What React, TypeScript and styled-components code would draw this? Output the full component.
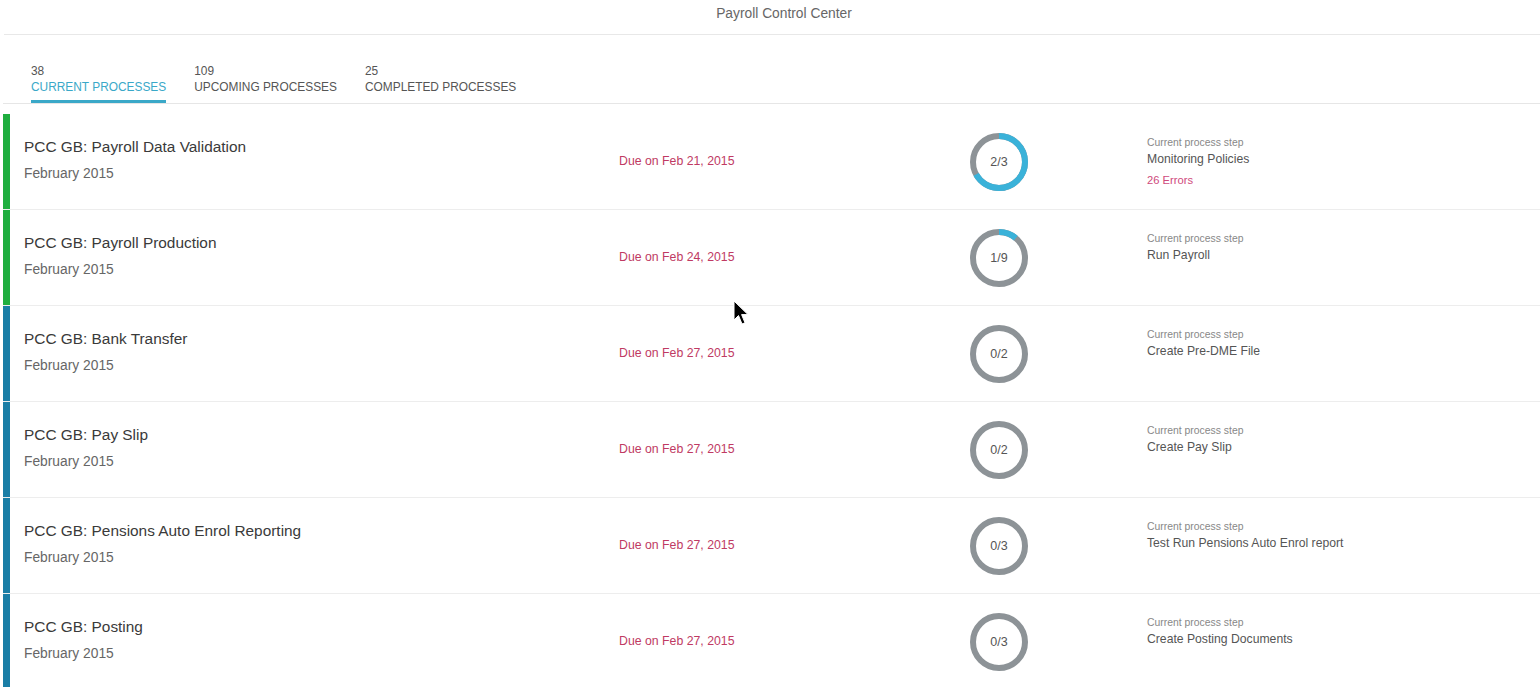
import React from 'react';
import styled, { createGlobalStyle } from 'styled-components';

const GlobalStyle = createGlobalStyle`
  html, body {
    margin: 0;
    padding: 0;
    background: #ffffff;
  }
  body {
    font-family: 'Liberation Sans', Arial, sans-serif;
    color: #333;
  }
`;

const Page = styled.div`
  position: relative;
  margin-left: 3px;
  width: 1537px;
  height: 687px;
  overflow: hidden;
`;

const Header = styled.div`
  height: 34px;
  line-height: 28px;
  text-align: center;
  font-size: 13.8px;
  color: #666;
  border-bottom: 1px solid #e8e8e8;
  margin-left: 1px;
  padding-left: 24px;
`;

const TabBar = styled.div`
  display: flex;
  gap: 28px;
  padding: 30px 0 0 28px;
  border-bottom: 1px solid #e6e6e6;
`;

const Tab = styled.div<{ active?: boolean }>`
  display: flex;
  flex-direction: column;
  font-size: 11.9px;
  color: ${(p) => (p.active ? '#3aa8c8' : '#555')};
`;

const Count = styled.div`
  line-height: 12px;
  color: #555;
`;

const TabLabel = styled.div`
  line-height: 20px;
  text-transform: uppercase;
`;

const Underline = styled.div<{ active?: boolean }>`
  margin-top: 3px;
  height: 3px;
  background: ${(p) => (p.active ? '#3aa8c8' : 'transparent')};
`;

const List = styled.div`
  padding-top: 10px;
`;

const Row = styled.div`
  display: flex;
  height: 95px;
  border-bottom: 1px solid #ededed;
`;

const Bar = styled.div<{ color: string }>`
  width: 7px;
  flex: none;
  background: ${(p) => p.color};
`;

const Cells = styled.div`
  flex: 1;
  display: grid;
  grid-template-columns: 595px 351px 177px 1fr;
  padding-left: 14px;
`;

const TitleCell = styled.div`
  padding-top: 23px;
`;

const Title = styled.div`
  font-size: 15.4px;
  line-height: 20px;
  color: #3a3a3a;
`;

const Period = styled.div`
  margin-top: 8px;
  font-size: 13.8px;
  line-height: 18px;
  color: #666;
`;

const Due = styled.div`
  display: flex;
  align-items: center;
  padding-bottom: 2px;
  font-size: 12.3px;
  color: #c03a63;
`;

const RingCell = styled.div`
  display: flex;
  align-items: center;
`;

const RingWrap = styled.div`
  position: relative;
  width: 58px;
  height: 58px;
`;

const RingLabel = styled.div`
  position: absolute;
  inset: 0;
  display: flex;
  align-items: center;
  justify-content: center;
  font-size: 12.5px;
  color: #555;
`;

const StepCell = styled.div`
  padding-top: 22px;
`;

const StepCaption = styled.div`
  font-size: 10.4px;
  line-height: 14px;
  color: #888;
`;

const StepName = styled.div`
  margin-top: 1px;
  font-size: 12.2px;
  line-height: 16px;
  color: #555;
`;

const Errors = styled.div`
  margin-top: 6px;
  font-size: 11.2px;
  line-height: 14px;
  color: #cf4a7c;
`;

const Cursor = styled.svg`
  position: absolute;
  left: 730px;
  top: 300px;
`;

interface Process {
  title: string;
  due: string;
  done: number;
  total: number;
  step: string;
  errors?: string;
  color: string;
}

const GREEN = '#1fae3f';
const BLUE = '#1a7ea6';

const processes: Process[] = [
  { title: 'PCC GB: Payroll Data Validation', due: 'Due on Feb 21, 2015', done: 2, total: 3, step: 'Monitoring Policies', errors: '26 Errors', color: GREEN },
  { title: 'PCC GB: Payroll Production', due: 'Due on Feb 24, 2015', done: 1, total: 9, step: 'Run Payroll', color: GREEN },
  { title: 'PCC GB: Bank Transfer', due: 'Due on Feb 27, 2015', done: 0, total: 2, step: 'Create Pre-DME File', color: BLUE },
  { title: 'PCC GB: Pay Slip', due: 'Due on Feb 27, 2015', done: 0, total: 2, step: 'Create Pay Slip', color: BLUE },
  { title: 'PCC GB: Pensions Auto Enrol Reporting', due: 'Due on Feb 27, 2015', done: 0, total: 3, step: 'Test Run Pensions Auto Enrol report', color: BLUE },
  { title: 'PCC GB: Posting', due: 'Due on Feb 27, 2015', done: 0, total: 3, step: 'Create Posting Documents', color: BLUE },
];

function Ring({ done, total }: { done: number; total: number }) {
  const r = 26;
  const c = 2 * Math.PI * r;
  const part = (done / total) * c;
  return (
    <RingWrap>
      <svg width="58" height="58" viewBox="0 0 58 58">
        <circle cx="29" cy="29" r={r} fill="none" stroke="#8d9397" strokeWidth="6" />
        {done > 0 && (
          <circle
            cx="29"
            cy="29"
            r={r}
            fill="none"
            stroke="#3ab2d9"
            strokeWidth="6"
            strokeDasharray={`${part} ${c}`}
            transform="rotate(-90 29 29)"
          />
        )}
      </svg>
      <RingLabel>
        {done}/{total}
      </RingLabel>
    </RingWrap>
  );
}

export default function App() {
  return (
    <Page>
      <GlobalStyle />
      <Header>Payroll Control Center</Header>
      <TabBar>
        <Tab active>
          <Count>38</Count>
          <TabLabel>Current Processes</TabLabel>
          <Underline active />
        </Tab>
        <Tab>
          <Count>109</Count>
          <TabLabel>Upcoming Processes</TabLabel>
          <Underline />
        </Tab>
        <Tab>
          <Count>25</Count>
          <TabLabel>Completed Processes</TabLabel>
          <Underline />
        </Tab>
      </TabBar>
      <List>
        {processes.map((p) => (
          <Row key={p.title}>
            <Bar color={p.color} />
            <Cells>
              <TitleCell>
                <Title>{p.title}</Title>
                <Period>February 2015</Period>
              </TitleCell>
              <Due>{p.due}</Due>
              <RingCell>
                <Ring done={p.done} total={p.total} />
              </RingCell>
              <StepCell>
                <StepCaption>Current process step</StepCaption>
                <StepName>{p.step}</StepName>
                {p.errors && <Errors>{p.errors}</Errors>}
              </StepCell>
            </Cells>
          </Row>
        ))}
      </List>
      <Cursor width="18" height="28" viewBox="0 0 18 28">
        <path d="M1 1 L1 20 L5.5 15.5 L9 24 L12 22.8 L8.6 14.6 L15 14.6 Z" fill="#000" stroke="#fff" strokeWidth="1" />
      </Cursor>
    </Page>
  );
}
